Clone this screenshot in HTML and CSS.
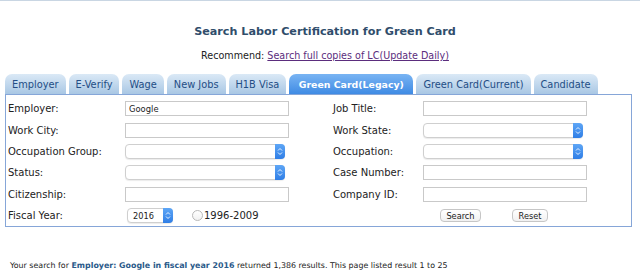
FILE: index.html
```html
<!DOCTYPE html>
<html lang="en">
<head>
  <meta charset="UTF-8">
  <title>Search Labor Certification for Green Card</title>
  <link rel="stylesheet" href="styles.css">
</head>
<body>

  <div class="page">
    <h1 class="title">Search Labor Certification for Green Card</h1>
    <p class="recommend">Recommend: <a href="#">Search full copies of LC(Update Daily)</a></p>

    <!-- Tabs -->
    <ul class="tabs">
      <li>Employer</li>
      <li>E-Verify</li>
      <li>Wage</li>
      <li>New Jobs</li>
      <li>H1B Visa</li>
      <li class="active">Green Card(Legacy)</li>
      <li>Green Card(Current)</li>
      <li>Candidate</li>
    </ul>

    <!-- Search form -->
    <form class="search-box">
      <label>Employer:</label>
      <div class="cell"><input type="text" value="Google"></div>
      <label>Job Title:</label>
      <div class="cell"><input type="text"></div>

      <label>Work City:</label>
      <div class="cell"><input type="text"></div>
      <label>Work State:</label>
      <div class="cell">
        <span class="select"><select></select>
          <svg class="arrow" viewBox="0 0 10 15"><path d="M3 6.5 L5 4.5 L7 6.5 M3 8.5 L5 10.5 L7 8.5"/></svg>
        </span>
      </div>

      <label>Occupation Group:</label>
      <div class="cell">
        <span class="select"><select></select>
          <svg class="arrow" viewBox="0 0 10 15"><path d="M3 6.5 L5 4.5 L7 6.5 M3 8.5 L5 10.5 L7 8.5"/></svg>
        </span>
      </div>
      <label>Occupation:</label>
      <div class="cell">
        <span class="select"><select></select>
          <svg class="arrow" viewBox="0 0 10 15"><path d="M3 6.5 L5 4.5 L7 6.5 M3 8.5 L5 10.5 L7 8.5"/></svg>
        </span>
      </div>

      <label>Status:</label>
      <div class="cell">
        <span class="select"><select></select>
          <svg class="arrow" viewBox="0 0 10 15"><path d="M3 6.5 L5 4.5 L7 6.5 M3 8.5 L5 10.5 L7 8.5"/></svg>
        </span>
      </div>
      <label>Case Number:</label>
      <div class="cell"><input type="text"></div>

      <label>Citizenship:</label>
      <div class="cell"><input type="text"></div>
      <label>Company ID:</label>
      <div class="cell"><input type="text"></div>

      <label>Fiscal Year:</label>
      <div class="cell">
        <span class="select small"><select><option>2016</option></select>
          <svg class="arrow" viewBox="0 0 10 15"><path d="M3 6.5 L5 4.5 L7 6.5 M3 8.5 L5 10.5 L7 8.5"/></svg>
        </span>
        <span class="radio"></span>1996-2009
      </div>
      <div class="cell buttons">
        <button type="button">Search</button>
        <button type="button">Reset</button>
      </div>
    </form>

    <p class="result">Your search for <b>Employer: Google in fiscal year 2016</b> returned 1,386 results. This page listed result 1 to 25</p>
  </div>

</body>
</html>
```

FILE: styles.css
```css
* {
  margin: 0;
  padding: 0;
  box-sizing: border-box;
}

body {
  background: #ffffff;
  font-family: "DejaVu Sans", Verdana, sans-serif;
  font-size: 10px;
  color: #222;
  border-top: 1px solid #c9d6e3;
}

.page {
  width: 640px;
  padding: 0 5px;
}

.title {
  font-size: 11.2px;
  font-weight: bold;
  color: #2f4d6b;
  text-align: center;
  padding-left: 10px;
  margin-top: 23px;
  line-height: 15px;
}

.recommend {
  font-size: 9.6px;
  text-align: center;
  padding-left: 10px;
  margin-top: 10px;
  line-height: 14px;
}
.recommend a {
  color: #5b2d7d;
}

/* Tabs */
.tabs {
  list-style: none;
  display: flex;
  gap: 3px;
  margin-top: 11px;
  height: 20px;
}
.tabs li {
  flex: none;
  white-space: nowrap;
  height: 20px;
  line-height: 21px;
  font-size: 9.8px;
  padding: 0 7px;
  border-radius: 7px 7px 0 0;
  background: linear-gradient(#dbe9f6, #a9c7e4);
  color: #234d85;
}
.tabs li.active {
  font-size: 9.4px;
  padding: 0 9.5px;
  background: linear-gradient(#79b4f3, #3f8be4);
  color: #fff;
  font-weight: bold;
}

/* Form */
.search-box {
  display: grid;
  grid-template-columns: 117px 208px 90px 1fr;
  grid-auto-rows: 21.4px;
  width: 627px;
  border: 1px solid #86a6d8;
  padding: 3px 0 0 2px;
}
.search-box label {
  display: flex;
  align-items: center;
  white-space: nowrap;
}
.cell {
  display: flex;
  align-items: center;
  white-space: nowrap;
}

input[type="text"] {
  width: 164px;
  height: 15px;
  border: 1px solid #c9c9c9;
  font-family: inherit;
  font-size: 8.4px;
  padding: 0 3px;
  color: #222;
}

.select {
  position: relative;
  display: inline-block;
  width: 160px;
  height: 15px;
}
.select select {
  appearance: none;
  width: 100%;
  height: 100%;
  border: 1px solid #cfcfcf;
  border-radius: 4px;
  background: #fff;
  box-shadow: 0 1px 1px rgba(0, 0, 0, 0.08);
  font-family: inherit;
  font-size: 8.2px;
  padding: 0 5px;
  color: #222;
}
.select .arrow {
  position: absolute;
  right: 0;
  top: 0;
  width: 10px;
  height: 15px;
  border-radius: 0 4px 4px 0;
  background: linear-gradient(#5ea6f6, #2f7ee6);
}
.select .arrow path {
  fill: none;
  stroke: #eaf3ff;
  stroke-width: 1;
}
.select.small {
  width: 46px;
  margin-left: 2px;
}

.radio {
  display: inline-block;
  width: 11px;
  height: 11px;
  border: 1px solid #b9b9b9;
  border-radius: 50%;
  margin-left: 19px;
  margin-right: 1px;
  background: linear-gradient(#fff, #f1f1f1);
}

.buttons {
  grid-column: span 2;
  padding-left: 107px;
}
.buttons button {
  height: 13px;
  border: 1px solid #c6c6c6;
  border-radius: 4px;
  background: linear-gradient(#ffffff, #f1f1f1);
  font-family: inherit;
  font-size: 8.2px;
  color: #222;
}
.buttons button:first-child {
  width: 41px;
  margin-right: 31px;
}
.buttons button:last-child {
  width: 36px;
}

.result {
  font-size: 7.9px;
  margin-top: 34px;
  padding-left: 5px;
}
.result b {
  color: #2b5a8a;
}
```
